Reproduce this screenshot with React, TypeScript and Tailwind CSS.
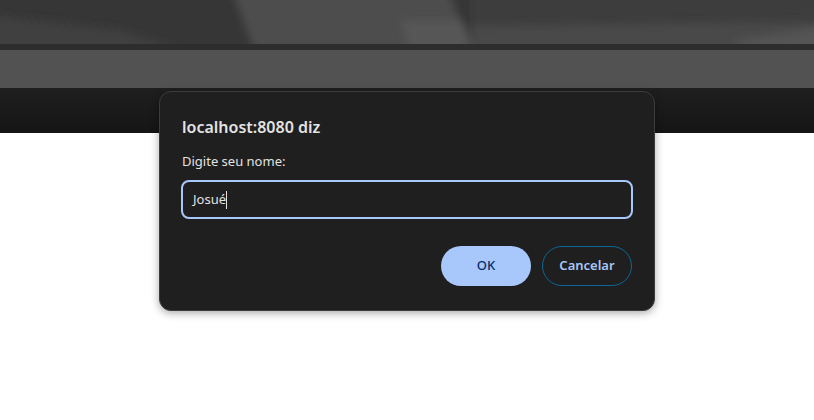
export default function App() {
  return (
    <div className="relative w-[814px] h-[420px] bg-white overflow-hidden" style={{ fontFamily: '"Noto Sans", "Open Sans", sans-serif' }}>
      {/* page behind the prompt */}
      <div className="flex flex-col">
        <div className="h-[44px]">
          <svg width="814" height="44" className="block">
            <defs>
              <filter id="blur" x="-20%" y="-100%" width="140%" height="300%">
                <feGaussianBlur stdDeviation="4" />
              </filter>
            </defs>
            <rect width="814" height="44" fill="#363636" />
            <polygon points="-20,14 120,30 180,50 -20,50" fill="#3f3f3f" filter="url(#blur)" />
            <polygon points="470,-10 830,-10 830,50 470,50" fill="#3c3c3c" filter="url(#blur)" />
            <polygon points="470,26 830,22 830,50 470,50" fill="#4a4a4a" filter="url(#blur)" />
            <polygon points="740,40 830,26 830,50 730,50" fill="#555" filter="url(#blur)" />
            <polygon points="232,-10 448,-10 472,50 254,50" fill="#4e4e4e" filter="url(#blur)" />
            <polygon points="400,20 460,20 472,50 410,50" fill="#575757" filter="url(#blur)" />
          </svg>
        </div>
        <div className="h-[6px] bg-[#2d2d2d]" />
        <div className="h-[38px] bg-[#525252]" />
        <div className="h-[45px] bg-gradient-to-b from-[#1f1f1f] to-[#151515]" />
      </div>

      {/* prompt dialog */}
      <div className="absolute left-[159px] top-[91px] w-[496px] h-[220px] rounded-xl border border-[#3c3c3c] bg-[#1f1f1f] shadow-[0_2px_8px_rgba(0,0,0,0.35)] px-[21px] pt-[24px] pb-[24px] flex flex-col">
        <div className="text-[16px] leading-[22px] font-semibold text-[#e3e3e3] pl-[1px]">localhost:8080 diz</div>
        <div className="mt-[14px] text-[13px] leading-[18px] text-[#e3e3e3] pl-[1px]">Digite seu nome:</div>
        <div className="mt-[10px] h-[39px] rounded-lg border-2 border-[#a8c7fa] bg-[#1f1f1f] flex items-center px-[10px]">
          <span className="text-[13px] text-[#e3e3e3]">Josué</span>
          <span className="w-px h-[18px] bg-[#e3e3e3]" />
        </div>
        <div className="mt-[27px] flex justify-end gap-[11px] pr-px">
          <button className="w-[90px] h-[40px] rounded-full bg-[#a8c7fa] text-[#062e6f] text-[13px] font-medium">OK</button>
          <button className="w-[90px] h-[40px] rounded-full border border-[#0c6796] text-[#a8c7fa] text-[13px] font-semibold">Cancelar</button>
        </div>
      </div>
    </div>
  );
}
